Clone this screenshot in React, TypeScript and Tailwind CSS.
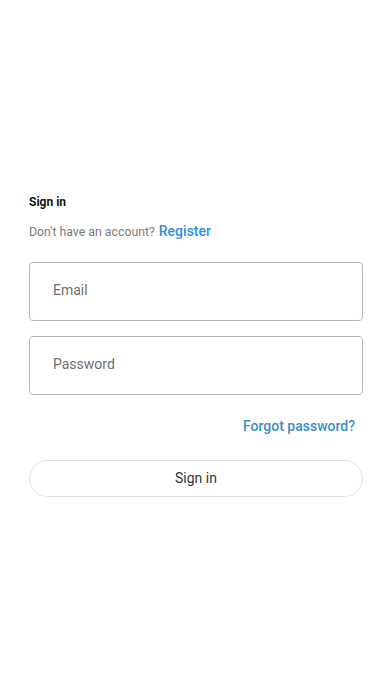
const SignIn = () => {
  return (
    <div className="min-h-[696px] w-full bg-white font-['Roboto',sans-serif]">
      <div className="px-[29px] pt-[194px]">
        <h1 className="text-[12px] leading-[16px] font-bold text-[#111]">Sign in</h1>

        <p className="mt-[11px] flex items-baseline text-[12.3px] leading-[20px] text-[#7a7a7a]">
          Don't have an account?
          <a href="#" className="ml-[4px] text-[14px] font-medium text-[#2f8fe6]">
            Register
          </a>
        </p>

        <form className="mt-[20px] flex flex-col gap-[15px]" onSubmit={(e) => e.preventDefault()}>
          <input
            type="email"
            placeholder="Email"
            className="h-[59px] w-full rounded-[4px] border border-[#b5b5b5] px-[23px] pb-[3px] text-[14px] text-[#333] placeholder:text-[#6e6e6e] outline-none"
          />
          <input
            type="password"
            placeholder="Password"
            className="h-[59px] w-full rounded-[4px] border border-[#b5b5b5] px-[23px] pb-[3px] text-[14px] text-[#333] placeholder:text-[#6e6e6e] outline-none"
          />

          <div className="mt-[6px] flex justify-end pr-[8px]">
            <a href="#" className="text-[14px] leading-[20px] font-medium text-[#3b8fc4]">
              Forgot password?
            </a>
          </div>

          <button
            type="submit"
            className="mt-[9px] h-[37px] w-full rounded-full border border-[#e0e0e0] bg-white text-[14px] text-[#333]"
          >
            Sign in
          </button>
        </form>
      </div>
    </div>
  );
};

export default function App() {
  return <SignIn />;
}
